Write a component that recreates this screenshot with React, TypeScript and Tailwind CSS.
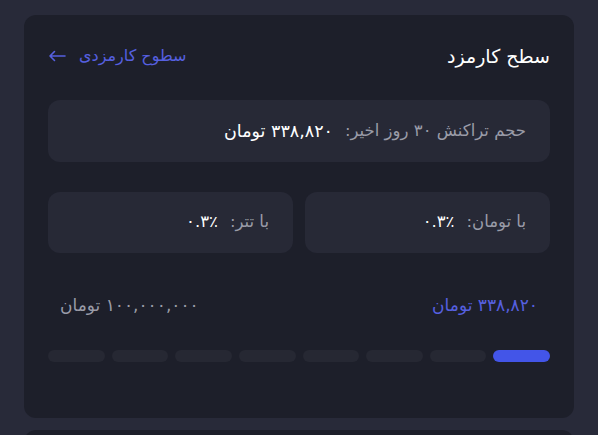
import React from 'react';

const segments = [true, false, false, false, false, false, false, false];

const App: React.FC = () => {
    return (
        <div
            dir="rtl"
            className="w-[598px] h-[435px] overflow-hidden bg-[#282a39] px-6 pt-[15px]"
            style={{ fontFamily: '"DejaVu Sans", "Noto Sans", sans-serif' }}
        >
            <div className="rounded-xl bg-[#1d1f2a] px-6 pt-[29px] h-[403px]">
                <div className="flex items-center justify-between h-[24px]">
                    <h2 className="text-[19px] text-white">سطح کارمزد</h2>
                    <a className="flex items-center gap-[13px] text-[16px] text-[#5660e0]">
                        <span>سطوح کارمزدی</span>
                        <svg width="18" height="12" viewBox="0 0 18 12" fill="none" stroke="currentColor" strokeWidth="1.6" strokeLinecap="round" strokeLinejoin="round">
                            <path d="M17 6H2M6.5 1.5L2 6l4.5 4.5" />
                        </svg>
                    </a>
                </div>

                <div className="mt-[32px] h-[62px] rounded-xl bg-[#272936] flex items-center px-6 gap-3 text-[16.5px]">
                    <span className="text-[#9a9ca8]">حجم تراکنش ۳۰ روز اخیر:</span>
                    <span className="text-white text-[17.5px]">۳۳۸,۸۲۰ تومان</span>
                </div>

                <div className="mt-[30px] grid grid-cols-2 gap-3">
                    <div className="h-[61px] rounded-xl bg-[#272936] flex items-center px-6 gap-3 text-[16.5px]">
                        <span className="text-[#9a9ca8]">با تومان:</span>
                        <span className="text-white">۰.۳٪</span>
                    </div>
                    <div className="h-[61px] rounded-xl bg-[#272936] flex items-center px-6 gap-3 text-[16.5px]">
                        <span className="text-[#9a9ca8]">با تتر:</span>
                        <span className="text-white">۰.۳٪</span>
                    </div>
                </div>

                <div className="mt-[40px] flex items-center justify-between px-[12px] text-[17px]">
                    <span className="text-[#5660e0]">۳۳۸,۸۲۰ تومان</span>
                    <span className="text-[#9a9ca8]">۱۰۰,۰۰۰,۰۰۰ تومان</span>
                </div>

                <div className="mt-[31px] grid grid-cols-8 gap-[7px]">
                    {segments.map((active, i) => (
                        <div
                            key={i}
                            className={active ? 'h-[12px] rounded-full bg-[#4355e8]' : 'h-[12px] rounded-full bg-[#262833]'}
                        />
                    ))}
                </div>
            </div>
            <div className="mt-[12px] rounded-xl bg-[#1d1f2a] h-[40px]" />
        </div>
    );
};

export default App;
